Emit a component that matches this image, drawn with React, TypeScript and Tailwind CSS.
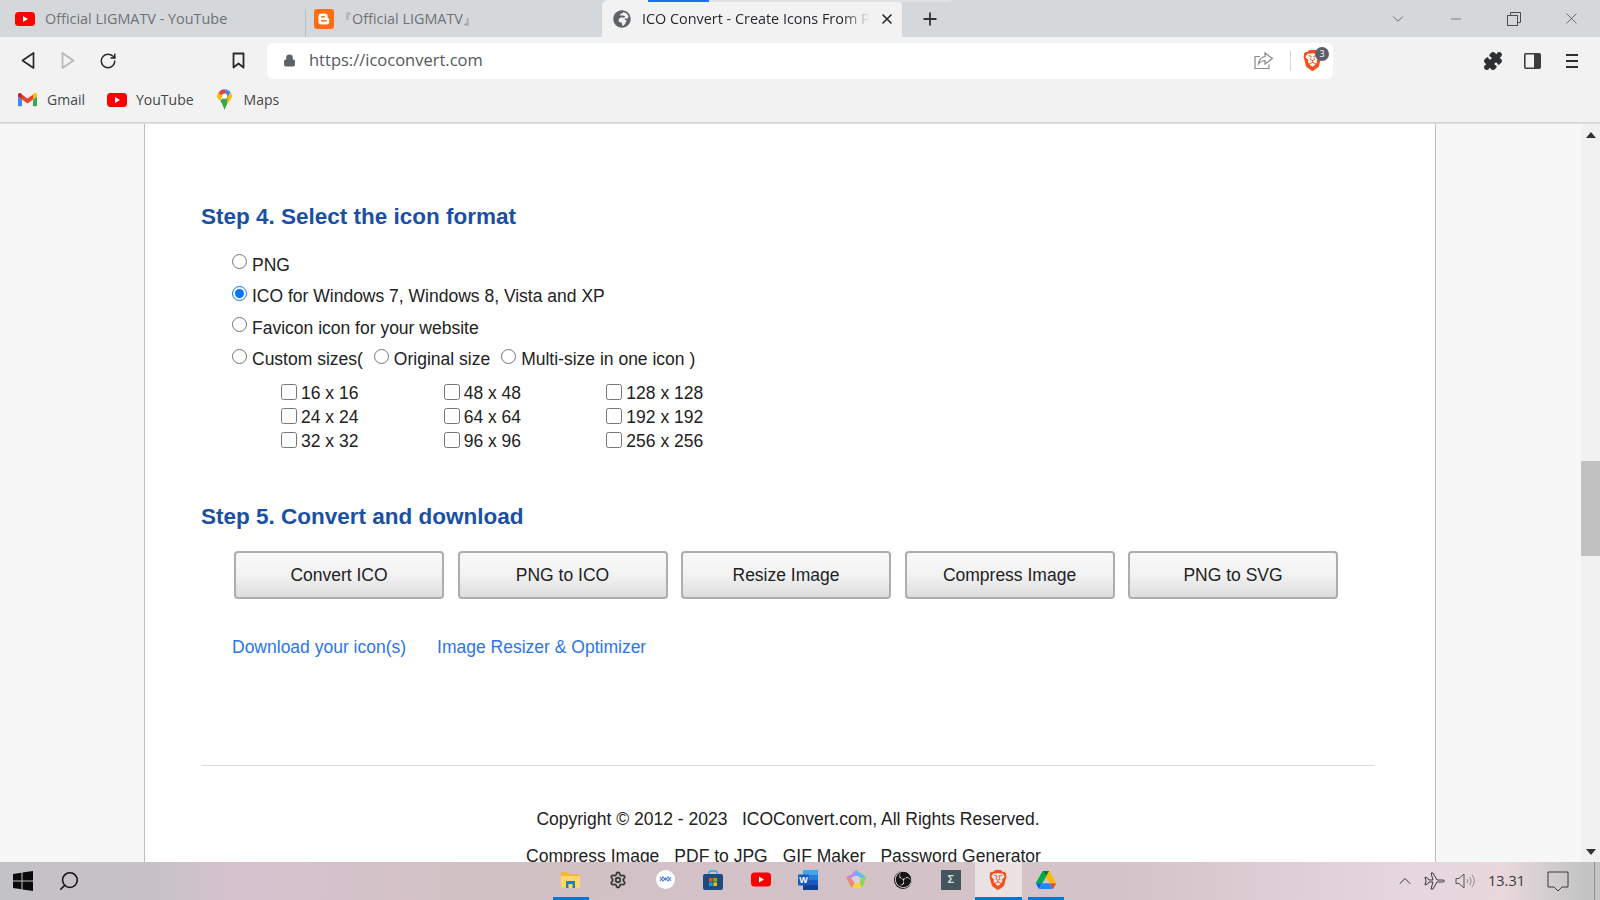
import { Lock, Minus, Plus, RotateCw, Settings, X, ChevronDown, ChevronUp, Search, Puzzle } from "lucide-react";
import { SiBrave, SiObsstudio } from "react-icons/si";
import { FaGlobeAfrica } from "react-icons/fa";

const chrome = { fontFamily: '"Open Sans", "Noto Sans", sans-serif' };
const page = { fontFamily: '"Liberation Sans", Arial, sans-serif' };

function YouTubeIcon({ w = 20, h = 14 }: { w?: number; h?: number }) {
  return (
    <svg width={w} height={h} viewBox="0 0 20 14">
      <rect width="20" height="14" rx="3.5" fill="#f00" />
      <path d="M8 4l5 3-5 3z" fill="#fff" />
    </svg>
  );
}

function BloggerIcon() {
  return (
    <svg width="20" height="20" viewBox="0 0 20 20">
      <rect width="20" height="20" rx="3" fill="#ff6d10" />
      <path d="M7.5 4.5h3.2a3 3 0 0 1 3 3v1a1 1 0 0 0 1 1 1 1 0 0 1 .6.8v2.2a3 3 0 0 1-3 3h-4.8a3 3 0 0 1-3-3v-5a3 3 0 0 1 3-3z" fill="#fff" />
      <rect x="7" y="7" width="4" height="1.6" rx=".8" fill="#ff6d10" />
      <rect x="7" y="11" width="6" height="1.6" rx=".8" fill="#ff6d10" />
    </svg>
  );
}

function GmailIcon() {
  return (
    <svg width="19" height="15" viewBox="0 2.5 24 18">
      <path fill="#4285f4" d="M1.6 20H5v-8.500L0 7.800v10.600c0 .9.700 1.600 1.600 1.600z" />
      <path fill="#34a853" d="M19 20h3.400c.900 0 1.600-.700 1.600-1.600V7.800l-5 3.700z" />
      <path fill="#fbbc04" d="M19 5.100v6.400l5-3.700V5.600c0-2-2.300-3.100-3.900-1.900z" />
      <path fill="#ea4335" d="M5 11.500V5.100l7 5.200 7-5.200v6.400l-7 5.200z" />
      <path fill="#c5221f" d="M0 5.600v2.200l5 3.700V5.100L3.900 3.700C2.300 2.500 0 3.600 0 5.600z" />
    </svg>
  );
}

function MapsIcon() {
  return (
    <svg width="15" height="21" viewBox="0 0 16 22">
      <path fill="#34a853" d="M3.500 12.500 11 4.500l3 1.500-6 16C7 18 5.500 15 3.500 12.500z" />
      <path fill="#fbbc04" d="M1.500 4 6 7.500 3.500 12.500C1.500 10.500 0 9 0 7.500 0 6 .500 5 1.500 4z" />
      <path fill="#ea4335" d="M1.500 4A8 8 0 0 1 8 0l2 3-4 4.500z" />
      <path fill="#4285f4" d="M8 0a8 8 0 0 1 6.500 3.500L10 9 6 7 10 3z" />
      <path fill="#fbbc04" d="M14.500 3.500C15.500 4.700 16 6 16 7.500 16 11 10 15 8 22l2-9 1-5z" />
      <path fill="#34a853" d="M11 8 8 11.500 4 13C5.500 15 7 18 8 22c.5-2 1.500-4 2.500-6z" />
      <circle cx="8" cy="7.500" r="2.800" fill="#fff" />
    </svg>
  );
}

function DriveIcon() {
  return (
    <svg width="20" height="18" viewBox="0 0 87.3 78">
      <path fill="#0066da" d="M6.600 66.850l3.850 6.650c.8 1.400 1.950 2.500 3.300 3.300L27.500 53H0c0 1.550.4 3.100 1.200 4.500z" />
      <path fill="#00ac47" d="M43.650 25L29.900 1.200c-1.350.8-2.500 1.900-3.300 3.300L1.200 48.500A9.060 9.060 0 0 0 0 53h27.500z" />
      <path fill="#ea4335" d="M73.550 76.800c1.350-.8 2.500-1.900 3.300-3.300l1.600-2.750 7.650-13.250c.8-1.400 1.200-2.950 1.200-4.500H59.800l5.850 11.500z" />
      <path fill="#00832d" d="M43.650 25L57.400 1.200C56.050.4 54.500 0 52.900 0H34.400c-1.600 0-3.150.45-4.500 1.200z" />
      <path fill="#2684fc" d="M59.800 53H27.500L13.750 76.800c1.350.8 2.900 1.200 4.500 1.200h50.800c1.600 0 3.150-.45 4.500-1.200z" />
      <path fill="#ffba00" d="M73.400 26.500L60.700 4.500c-.8-1.400-1.950-2.500-3.300-3.300L43.650 25 59.800 53h27.450c0-1.550-.4-3.100-1.200-4.500z" />
    </svg>
  );
}

function WindowsIcon() {
  return (
    <svg width="20" height="20" viewBox="0 0 20 20" fill="#0a0a0a">
      <path d="M0 3l8.500-1.200V9.500H0z" />
      <path d="M9.500 1.600 20 0v9.500H9.500z" />
      <path d="M0 10.500h8.500v7.700L0 17z" />
      <path d="M9.500 10.500H20V20L9.500 18.400z" />
    </svg>
  );
}

function FilesIcon() {
  return (
    <svg width="19" height="17" viewBox="0 0 19 17">
      <path d="M0 2a1 1 0 0 1 1-1h6l2 2h9a1 1 0 0 1 1 1v2H0z" fill="#f5b83d" />
      <rect y="5" width="19" height="12" rx="1" fill="#ffd76e" />
      <rect x="5" y="10" width="9" height="7" fill="#1f7fc4" />
      <rect x="7.500" y="13" width="4" height="4" fill="#ffd76e" />
    </svg>
  );
}

function ChatIcon() {
  return (
    <svg width="19" height="19" viewBox="0 0 19 19">
      <circle cx="9.500" cy="9.500" r="9.500" fill="#fff" />
      <path d="M4 7l3 4 2.500-3 2.500 3 3-4" fill="none" stroke="#4f7fe0" strokeWidth="1.100" />
      <path d="M4 11l3-4 2.500 3 2.500-3 3 4" fill="none" stroke="#4f7fe0" strokeWidth="1.100" />
    </svg>
  );
}

function StoreIcon() {
  return (
    <svg width="20" height="20" viewBox="0 0 20 20">
      <path d="M6 5V2.500A1.500 1.500 0 0 1 7.500 1h5A1.500 1.500 0 0 1 14 2.500V5" fill="none" stroke="#2ea3dc" strokeWidth="1.300" />
      <rect y="4" width="20" height="16" rx="2" fill="#1e4a7f" />
      <rect x="6" y="8" width="3.600" height="3.600" fill="#f25022" />
      <rect x="10.400" y="8" width="3.600" height="3.600" fill="#7fba00" />
      <rect x="6" y="12.400" width="3.600" height="3.600" fill="#00a4ef" />
      <rect x="10.400" y="12.400" width="3.600" height="3.600" fill="#ffb900" />
    </svg>
  );
}

function WordIcon() {
  return (
    <svg width="20" height="20" viewBox="0 0 20 20">
      <rect x="5" y="0" width="15" height="20" rx="1" fill="#2b7cd3" />
      <rect x="5" y="0" width="15" height="5" fill="#41a5ee" />
      <rect x="5" y="10" width="15" height="5" fill="#185abd" />
      <rect x="5" y="15" width="15" height="5" fill="#103f91" />
      <rect x="0" y="4.500" width="11" height="11" rx="1" fill="#185abd" />
      <text x="5.500" y="13" textAnchor="middle" fontSize="9" fontWeight="700" fill="#fff" fontFamily="Liberation Sans, sans-serif">W</text>
    </svg>
  );
}

function PolygonIcon() {
  return (
    <svg width="20" height="20" viewBox="0 0 20 20">
      <path d="M10 0 5 5l5 1z" fill="#c77dff" />
      <path d="M10 0l10 7-5 1-5-2z" fill="#5fb8f0" />
      <path d="M20 7l-3.500 11-3-5 1.500-5z" fill="#8cd84c" />
      <path d="M16.500 18h-11l3-5h5z" fill="#f5d53f" />
      <path d="M5.500 18 0 7l5 .5 3.500 5.500z" fill="#f2857a" />
      <path d="M0 7l5-2 5 1-5 1.500z" fill="#a889f0" />
      <path d="M8 6h4l2.500 2-1 5h-5L6 8z" fill="#d8d2e0" />
    </svg>
  );
}

function ObsIcon() {
  return (
    <div className="flex h-[18px] w-[18px] items-center justify-center rounded-full bg-[#151515]">
      <SiObsstudio size={17} color="#e8e8e8" />
    </div>
  );
}

function SigmaIcon() {
  return (
    <div className="flex h-5 w-5 items-center justify-center bg-[#44545c] text-[11px] font-bold text-[#d6e0e4]" style={page}>
      Σ
    </div>
  );
}

function BraveBadge() {
  return (
    <div className="relative flex h-[24px] w-[24px] items-center">
      <SiBrave size={21} color="#f4511e" />
      <span className="absolute right-[-3px] top-[-2px] flex h-[14px] w-[14px] items-center justify-center rounded-full bg-[#5a5f6b] text-[9px] text-white">3</span>
    </div>
  );
}

const dockIcons = [
  { el: <FilesIcon />, on: true },
  { el: <Settings size={18} strokeWidth={2.4} className="text-[#3a3a3a]" /> },
  { el: <ChatIcon /> },
  { el: <StoreIcon /> },
  { el: <YouTubeIcon w={20} h={15} /> },
  { el: <WordIcon /> },
  { el: <PolygonIcon /> },
  { el: <ObsIcon /> },
  { el: <SigmaIcon /> },
  { el: <SiBrave size={20} color="#f4511e" />, on: true, active: true },
  { el: <DriveIcon />, on: true },
];

function Radio({ checked }: { checked?: boolean }) {
  return <input type="radio" name="fmt" defaultChecked={checked} className="h-[15px] w-[15px] shrink-0 accent-[#0075ff]" />;
}

function Check() {
  return <input type="checkbox" className="m-0 h-[16px] w-[16px] shrink-0" />;
}

function SizeCell({ label }: { label: string }) {
  return (
    <label className="flex h-[24px] w-[162.5px] items-center gap-[4px]">
      <span className="flex -translate-y-[2px]"><Check /></span>
      <span>{label}</span>
    </label>
  );
}

export default function App() {
  return (
    <div className="flex h-[900px] w-[1600px] flex-col overflow-hidden bg-[#f7f7f7]">
      {/* tab strip */}
      <div className="flex h-[37px] shrink-0 items-stretch bg-[#d5d8db] text-[14.400px] text-[#6d7276]" style={chrome}>
        <div className="flex w-[305px] items-center gap-[10px] pl-[15px]">
          <YouTubeIcon />
          <span>Official LIGMATV - YouTube</span>
        </div>
        <div className="mt-[9px] w-px bg-[#b9bcc0]" />
        <div className="flex w-[296px] items-center gap-[4px] pl-[8px]">
          <BloggerIcon />
          <span>『Official LIGMATV』</span>
        </div>
        <div className="relative flex w-[300px] items-center rounded-t-[6px] bg-[#f2f2f2] pl-[11px] text-[#26282c]">
          <div className="absolute left-[46px] top-0 h-[2px] w-[61px] bg-[#1a73e8]" />
          <div className="absolute left-[107px] right-[-49px] top-0 h-[2px] bg-[#dfe2e4]" />
          <FaGlobeAfrica size={18} className="shrink-0 text-[#5f6368]" />
          <span className="ml-[11px] w-[228px] whitespace-nowrap [mask-image:linear-gradient(to_right,black_88%,transparent)]">ICO Convert - Create Icons From P</span>
          <X size={16} strokeWidth={2.4} className="ml-[9px] shrink-0 text-[#26282c]" />
        </div>
        <div className="flex w-[56px] items-center justify-center text-[#2f3236]">
          <Plus size={20} strokeWidth={2.2} />
        </div>
        <div className="flex flex-1 items-center justify-end text-[#4a4d50]">
          <div className="flex w-[58px] justify-center"><ChevronDown size={18} strokeWidth={1} /></div>
          <div className="flex w-[58px] justify-center"><Minus size={16} strokeWidth={1} /></div>
          <div className="flex w-[58px] justify-center">
            <svg width="14" height="14" viewBox="0 0 14 14" fill="none" stroke="currentColor" strokeWidth="1">
              <rect x=".5" y="3.500" width="10" height="10" />
              <path d="M3.500 3.500V.5h10v10h-3" />
            </svg>
          </div>
          <div className="flex w-[57px] justify-center"><X size={19} strokeWidth={1} /></div>
        </div>
      </div>

      {/* toolbar */}
      <div className="flex h-[42px] shrink-0 items-center bg-[#f2f2f2] pt-[5px]" style={chrome}>
        <div className="flex w-[267px] items-center text-[#26282c]">
          <div className="flex w-[55px] justify-center">
            <svg width="14" height="17" viewBox="0 0 14 17" fill="none" stroke="currentColor" strokeWidth="1.700" strokeLinejoin="round"><path d="M12.500 1v15L1.500 8.500z" /></svg>
          </div>
          <div className="-ml-[15px] flex w-[55px] justify-center text-[#b5b7ba]">
            <svg width="14" height="17" viewBox="0 0 14 17" fill="none" stroke="currentColor" strokeWidth="1.700" strokeLinejoin="round"><path d="M1.500 1v15l11-7.500z" /></svg>
          </div>
          <div className="-ml-[15px] flex w-[55px] justify-center"><RotateCw size={18} strokeWidth={2} /></div>
          <div className="ml-[76px] flex w-[55px] justify-center">
            <svg width="13" height="17" viewBox="0 0 13 17" fill="none" stroke="currentColor" strokeWidth="1.800" strokeLinejoin="round"><path d="M1.500 1.500h10v14l-5-4-5 4z" /></svg>
          </div>
        </div>
        <div className="flex h-[36px] w-[1066px] items-center rounded-[6px] bg-white pl-[16px] pr-[7px] text-[16.5px] text-[#55595e]">
          <Lock size={13} fill="#5f6368" className="text-[#5f6368]" />
          <span className="ml-[13px] flex-1">https://icoconvert.com</span>
          <svg width="20" height="18" viewBox="0 0 20 18" fill="none" stroke="#85888c" strokeWidth="1.200" className="mr-[16px]">
            <path d="M6 4.500H1v12h14v-4" />
            <path d="M11 1l7.500 5.500L11 12V8.500C8 8.500 6 10 4.500 12 5 8 7 5 11 4.500z" />
          </svg>
          <div className="mr-[11px] h-[20px] w-px bg-[#d5d6d8]" />
          <BraveBadge />
        </div>
        <div className="flex flex-1 items-center text-[#2d3033]">
          <div className="ml-[140px] flex w-[40px] justify-center"><Puzzle size={20} fill="currentColor" strokeWidth={1.500} /></div>
          <div className="flex w-[39px] justify-center">
            <svg width="17" height="16" viewBox="0 0 17 16"><rect x=".8" y=".8" width="15.400" height="14.400" rx="1" fill="none" stroke="#3a3d40" strokeWidth="1.600" /><rect x="10" y="1" width="6" height="14" fill="#3a3d40" /></svg>
          </div>
          <div className="flex w-[40px] flex-col items-center gap-[4px]">
            <div className="h-[2px] w-[12px] bg-[#2d3033]" />
            <div className="h-[2px] w-[12px] bg-[#2d3033]" />
            <div className="h-[2px] w-[12px] bg-[#2d3033]" />
          </div>
        </div>
      </div>

      {/* bookmarks */}
      <div className="flex h-[44px] shrink-0 items-center border-b border-[#d4d5d7] bg-[#f2f2f2] pb-[2px] text-[14px] text-[#43474b]" style={chrome}>
        <div className="ml-[18px] flex items-center gap-[10px]"><GmailIcon /><span>Gmail</span></div>
        <div className="ml-[22px] flex items-center gap-[9px]"><YouTubeIcon /><span>YouTube</span></div>
        <div className="ml-[23px] flex items-center gap-[12px]"><MapsIcon /><span>Maps</span></div>
      </div>

      {/* page */}
      <div className="flex min-h-0 flex-1 overflow-hidden border-t border-[#e0e0e0]" style={page}>
        <div className="w-[144px] shrink-0 bg-[#f7f7f7]" />
        <div className="w-[1292px] shrink-0 border-x border-[#bdbdbd] bg-white pl-[56px] pr-[60px] text-[17.500px] text-[#222]">
          <h2 className="mt-[79px] text-[22.500px] font-bold leading-[28px] text-[#1a4fa3]">Step 4. Select the icon format</h2>

          <div className="ml-[31px] mt-[18px] flex flex-col">
            <label className="flex h-[31.500px] items-center gap-[5px]"><span className="flex -translate-y-[3px]"><Radio /></span>PNG</label>
            <label className="flex h-[31.500px] items-center gap-[5px]"><span className="flex -translate-y-[3px]"><Radio checked /></span>ICO for Windows 7, Windows 8, Vista and XP</label>
            <label className="flex h-[31.500px] items-center gap-[5px]"><span className="flex -translate-y-[3px]"><Radio /></span>Favicon icon for your website</label>
            <div className="flex h-[31.500px] items-center">
              <label className="flex items-center gap-[5px]"><span className="flex -translate-y-[3px]"><Radio /></span>Custom sizes(</label>
              <label className="ml-[11px] flex items-center gap-[5px]"><span className="flex -translate-y-[3px]"><Radio /></span>Original size</label>
              <label className="ml-[11px] flex items-center gap-[5px]"><span className="flex -translate-y-[3px]"><Radio /></span>Multi-size in one icon )</label>
            </div>
          </div>

          <div className="ml-[80px] mt-[6.500px] grid w-[488px] grid-cols-3">
            {["16 x 16", "48 x 48", "128 x 128", "24 x 24", "64 x 64", "192 x 192", "32 x 32", "96 x 96", "256 x 256"].map((s) => (
              <SizeCell key={s} label={s} />
            ))}
          </div>

          <h2 className="mt-[49.500px] text-[22.500px] font-bold leading-[28px] text-[#1a4fa3]">Step 5. Convert and download</h2>

          <div className="ml-[33px] mt-[20px] flex gap-[13.500px]">
            {["Convert ICO", "PNG to ICO", "Resize Image", "Compress Image", "PNG to SVG"].map((b) => (
              <button key={b} className="h-[48px] w-[210px] rounded-[4px] border-2 border-[#adadad] bg-gradient-to-b from-[#f9f9f9] via-[#f2f2f2] to-[#dddddd] text-[#222]">
                {b}
              </button>
            ))}
          </div>

          <div className="ml-[31px] mt-[37px] flex gap-[31px] leading-[22px] text-[#2a76e8]">
            <a>Download your icon(s)</a>
            <a>Image Resizer &amp; Optimizer</a>
          </div>

          <hr className="mt-[107px] border-[#dcdcdc]" />

          <div className="mt-[41px] text-center leading-[24px]">Copyright © 2012 - 2023 &nbsp; ICOConvert.com, All Rights Reserved.</div>
          <div className="mt-[13px] flex justify-center gap-[15px] pr-[9px] leading-[24px]">
            <a>Compress Image</a>
            <a>PDF to JPG</a>
            <a>GIF Maker</a>
            <a>Password Generator</a>
          </div>
        </div>
        <div className="flex-1 bg-[#f7f7f7]" />
        <div className="flex w-[19px] shrink-0 flex-col items-center bg-[#f1f1f1]">
          <div className="mt-[8px] h-0 w-0 border-x-[5px] border-b-[6px] border-x-transparent border-b-[#333]" />
          <div className="mt-[323px] h-[95px] w-full bg-[#c1c1c1]" />
          <div className="mt-auto mb-[7px] h-0 w-0 border-x-[5px] border-t-[6px] border-x-transparent border-t-[#333]" />
        </div>
      </div>

      {/* taskbar */}
      <div className="flex h-[38px] shrink-0 items-stretch bg-[linear-gradient(90deg,#c3c2c6_0%,#c8c2c7_10%,#d6c2cf_15%,#d1c1c3_30%,#d3c1c8_50%,#d4c4c9_70%,#e5d6df_88%,#e8d8dc_94%,#c4c4c4_99%)]" style={chrome}>
        <div className="flex w-[46px] items-center justify-center"><WindowsIcon /></div>
        <div className="flex w-[46px] items-center justify-center"><Search size={22} strokeWidth={1.700} className="-scale-x-100 text-[#111]" /></div>
        <div className="ml-[455px] flex">
          {dockIcons.map((d, i) => (
            <div key={i} className={"flex w-[47.500px] flex-col items-center " + (d.active ? "bg-[#ebe3e3]" : "")}>
              <div className="flex flex-1 items-center justify-center">{d.el}</div>
              <div className={"h-[3px] " + (d.active ? "w-full " : "w-[36px] ") + (d.on ? "bg-[#0078d7]" : "bg-transparent")} />
            </div>
          ))}
        </div>
        <div className="ml-[320px] flex flex-1 items-center text-[#3a3a3a]">
          <div className="flex w-[30px] justify-center"><ChevronUp size={20} strokeWidth={1.200} /></div>
          <div className="flex w-[30px] justify-center">
            <svg width="21" height="20" viewBox="0 0 21 20" fill="none" stroke="#3a3a3a" strokeWidth="1" strokeLinejoin="round">
              <path d="M1 6l2.500 1 1.500 2h4L7 2h2l4 7h5c1.500 0 2.500.5 2.500 1s-1 1-2.500 1h-5l-4 7H7l2-7H5l-1.500 2L1 14l1-4z" />
            </svg>
          </div>
          <div className="flex w-[30px] justify-center">
            <svg width="20" height="18" viewBox="0 0 20 18" fill="none" stroke="#555" strokeWidth="1">
              <path d="M1 6.500h3L9 2v14l-5-4.500H1z" />
              <path d="M12 7a3 3 0 0 1 0 4M14.500 5a6 6 0 0 1 0 8M17 3a9 9 0 0 1 0 12" opacity=".6" />
            </svg>
          </div>
          <div className="w-[54px] text-center text-[14.500px]">13.31</div>
          <div className="ml-[1px] flex w-[46px] justify-center">
            <svg width="22" height="21" viewBox="0 0 22 21" fill="none" stroke="#3a3a3a" strokeWidth="1"><path d="M1 1h20v15h-6l-4 4-4-4H1z" /></svg>
          </div>
          <div className="ml-auto mr-[5px] h-full w-px bg-[#8f8f8f]" />
        </div>
      </div>
    </div>
  );
}
